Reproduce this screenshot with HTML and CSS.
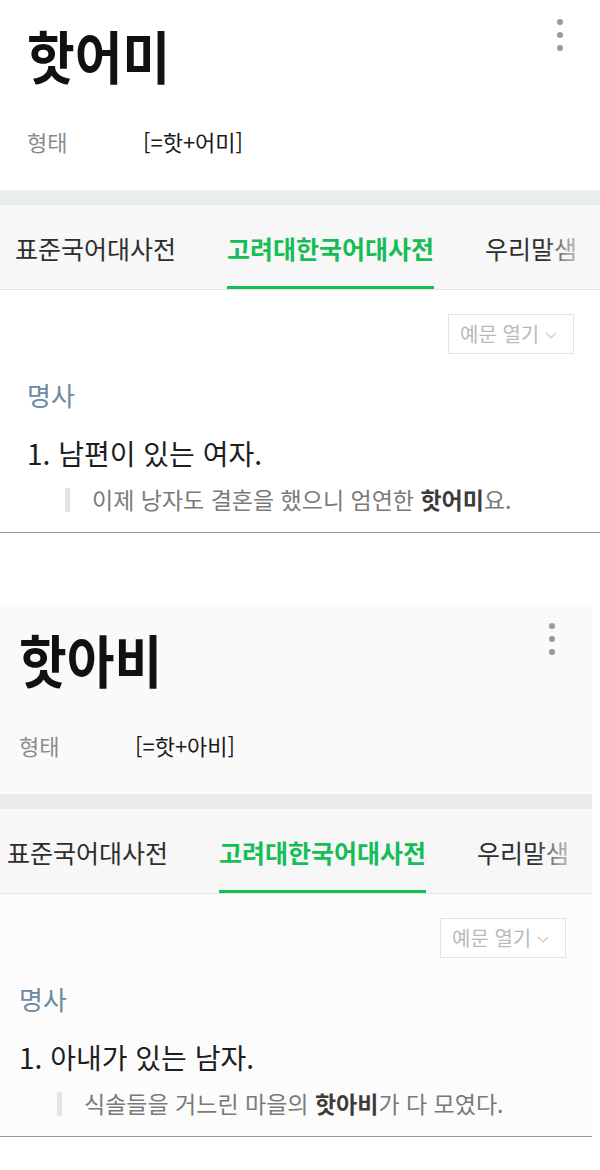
FILE: index.html
```html
<!DOCTYPE html>
<html lang="ko">
<head>
<meta charset="utf-8">
<title>핫어미 · 핫아비</title>
<link rel="stylesheet" href="styles.css">
</head>
<body>
<div class="page">
  <section class="entry">
    <header class="head">
      <div class="head-top">
        <h1 class="title"><span class="title-text">핫어미</span></h1>
        <div class="more" aria-label="더보기"><i></i><i></i><i></i></div>
      </div>
      <div class="meta"><span class="meta-label">형태</span><span class="meta-value">[=핫+어미]</span></div>
    </header>
    <div class="band"></div>
    <nav class="tabs">
      <div class="tabs-track">
        <span class="tab">표준국어대사전</span>
        <span class="tab tab--active">고려대한국어대사전</span>
        <span class="tab">우리말샘</span>
      </div>
    </nav>
    <div class="body">
      <div class="tools">
        <button class="toggle">예문 열기<svg class="chev" viewBox="0 0 12 7" width="12" height="7"><polyline points="1,1 6,6 11,1" fill="none" stroke="#c8c8c8" stroke-width="1.2"/></svg></button>
      </div>
      <div class="pos">명사</div>
      <p class="def">1. 남편이 있는 여자.</p>
      <p class="ex">이제 낭자도 결혼을 했으니 엄연한 <b>핫어미</b>요.</p>
    </div>
  </section>

  <section class="entry entry--second">
    <header class="head">
      <div class="head-top">
        <h1 class="title"><span class="title-text">핫아비</span></h1>
        <div class="more" aria-label="더보기"><i></i><i></i><i></i></div>
      </div>
      <div class="meta"><span class="meta-label">형태</span><span class="meta-value">[=핫+아비]</span></div>
    </header>
    <div class="band"></div>
    <nav class="tabs">
      <div class="tabs-track">
        <span class="tab">표준국어대사전</span>
        <span class="tab tab--active">고려대한국어대사전</span>
        <span class="tab">우리말샘</span>
      </div>
    </nav>
    <div class="body">
      <div class="tools">
        <button class="toggle">예문 열기<svg class="chev" viewBox="0 0 12 7" width="12" height="7"><polyline points="1,1 6,6 11,1" fill="none" stroke="#c8c8c8" stroke-width="1.2"/></svg></button>
      </div>
      <div class="pos">명사</div>
      <p class="def">1. 아내가 있는 남자.</p>
      <p class="ex">식솔들을 거느린 마을의 <b>핫아비</b>가 다 모였다.</p>
    </div>
  </section>
</div>
</body>
</html>
```

FILE: styles.css
```css
* { box-sizing: border-box; }
html, body { margin: 0; padding: 0; }
body {
  width: 600px;
  height: 1170px;
  overflow: hidden;
  background: #ffffff;
  font-family: "Noto Sans CJK KR", Roboto, "Noto Sans", sans-serif;
  color: #222;
}
.page { display: flex; flex-direction: column; }

.entry { width: 600px; background: #fff; }
.entry--second { margin-top: 71px; margin-left: -8px; }

.head { padding: 19px 37px 38px 27px; background: #fff; }
.entry--second .head { background: #fafafa; }
.head-top { display: flex; justify-content: space-between; align-items: flex-start; }
.title { margin: 7px 0 0; font-size: 57px; line-height: 57px; font-weight: 700; color: #111; }
.title-text { display: inline-block; transform: scaleX(0.91); transform-origin: 0 50%; }
.more { display: flex; flex-direction: column; gap: 7px; }
.more i { display: block; width: 6px; height: 6px; border-radius: 50%; background: #9a9a9a; }

.meta { display: flex; margin-top: 47px; font-size: 22px; line-height: 22px; }
.meta-label { width: 116px; color: #8c8c8c; }
.meta-value { color: #1a1a1a; }

.band { height: 15px; background: #e8eeec; }
.entry--second .band { background: #ebebeb; }

.tabs { position: relative; height: 85px; background: #f7f7f7; border-bottom: 1px solid #e4e4e4; overflow: hidden; }
.tabs::after {
  content: "";
  position: absolute; top: 0; right: 0; bottom: 0; width: 56px;
  background: linear-gradient(to right, rgba(247,247,247,0) 0, rgba(247,247,247,0.6) 45%, rgba(247,247,247,0.85) 100%);
}
.tabs-track {
  display: flex; gap: 51px; height: 100%;
  padding-left: 15px;
  white-space: nowrap;
}
.tab { position: relative; display: flex; align-items: center; font-size: 25px; color: #2e2e2e; padding-top: 2px; }
.tab--active { color: #16bd57; font-weight: 700; }
.tab--active::after {
  content: ""; position: absolute; left: 0; right: 0; bottom: 0; height: 3px; background: #16bd57;
}

.body { padding: 24px 26px 20px 27px; border-bottom: 1px solid #9b9b9b; background: #fff; }
.entry--second .body { background: #fcfcfc; }
.tools { display: flex; justify-content: flex-end; }
.toggle {
  display: flex; align-items: center; gap: 6px;
  width: 126px; height: 40px; padding: 0 0 0 11px;
  border: 1px solid #e2e2e2; background: #fff; border-radius: 0;
  font-family: inherit; font-size: 20px; line-height: 20px; color: #b9b9b9;
}
.chev { margin-top: 2px; }
.pos { margin-top: 28px; font-size: 26px; line-height: 26px; color: #6b8aa2; }
.def { margin: 31px 0 0; font-size: 28px; line-height: 28px; color: #1e1e1e; }
.ex {
  margin: 21px 0 0 38px; padding: 0 0 1px 22px;
  border-left: 5px solid #e4e4e4;
  font-size: 23px; line-height: 23px; color: #7a7a7a;
}
.ex b { color: #3c3c3c; font-weight: 700; }
```
